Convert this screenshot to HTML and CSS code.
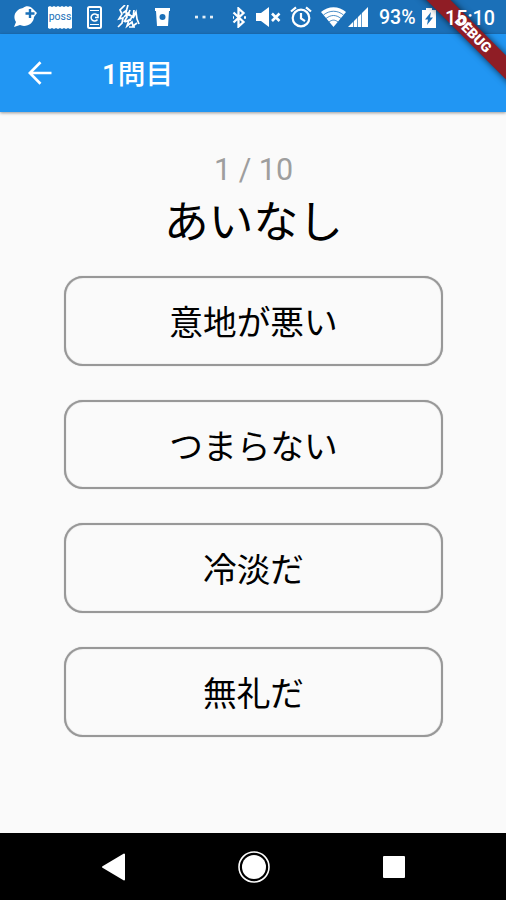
FILE: index.html
```html
<!DOCTYPE html>
<html lang="ja">
<head>
<meta charset="utf-8">
<title>1問目</title>
<link rel="stylesheet" href="styles.css">
</head>
<body>
<div class="screen">
  <div class="status">
    <svg class="bubble" width="24" height="24" viewBox="0 0 24 24"><path fill="#fff" d="M10 3C13 0 18 1 20 4l4 4-3 4c0 5-5 9-10 9-2 0-3-1-4-1l-6 2 2-5C-1 11 3 4 10 3Z"/><path d="M17 4v9M12.500 8.500h9" stroke="#1b70b8" stroke-width="2.4"/></svg>
    <svg class="poss" width="24" height="23" viewBox="0 0 24 23"><path fill="#fff" d="M0 1l2-1 2 1 2-1 2 1 2-1 2 1 2-1 2 1 2-1 2 1 2-1 2 1v21l-2 1-2-1-2 1-2-1-2 1-2-1-2 1-2-1-2 1-2-1-2 1-2-1Z"/><text x="12" y="14" text-anchor="middle">poss</text></svg>
    <svg class="phone" width="15" height="23" viewBox="0 0 15 23"><rect x="1" y="1" width="13" height="21" rx="1.500" fill="none" stroke="#fff" stroke-width="2"/><path d="M3 4.500h9M3 18.500h9" stroke="#fff"/><path d="M10.500 9.500A3.500 3.500 0 1 0 10.500 13.500M11 8v3.500H8" fill="none" stroke="#fff" stroke-width="1.500"/></svg>
    <svg class="figure" width="23" height="24" viewBox="0 0 23 24" fill="none" stroke="#fff" stroke-width="1.700"><path d="M8 0L3 5l2 4-3 5 4-1-1 5-4 4M11 0L9 7l1 5-3 5M7 12l4-4 3 3M13 5l-2 5 4 1-2 5M17 5l-1 8 3-6 1 7 2 5M8 17l4-2-2 6 5-4 1 4 4-3M12 22h6M6 8l4-3"/></svg>
    <svg class="cup" width="15" height="18" viewBox="0 0 15 18"><path fill="#fff" d="M0 0h15v3h-1l-1 15H2L1 3H0Z"/><circle cx="7.500" cy="9" r="3" fill="#1b70b8"/></svg>
    <svg class="dots" width="18" height="4" viewBox="0 0 18 4" fill="#e2edf6"><rect y=".7" width="3" height="2.700"/><rect x="7.500" y=".7" width="3" height="2.700"/><rect x="15" y=".7" width="3" height="2.700"/></svg>
    <svg class="bluetooth" width="14" height="21" viewBox="0 0 14 21"><path d="M1.500 5.500l10 9.500-5 4.500v-18l5 4.500-10 9.500M1 10.500h1M12 10.500h2" fill="none" stroke="#fff" stroke-width="2.300"/></svg>
    <svg class="mute" width="25" height="20" viewBox="0 0 25 20"><path fill="#fff" d="M0 6h5l8-6v20l-8-6H0Z"/><path d="M16 6.500l7.500 7.500M23.500 6.500L16 14" stroke="#fff" stroke-width="2.600"/></svg>
    <svg class="alarm" width="22" height="22" viewBox="0 0 22 22" fill="none" stroke="#fff" stroke-width="2.200"><circle cx="11" cy="12" r="8.300"/><path d="M11 7v5.500l4 2.600M1 5.500L6 1.300M21 5.500L16 1.300"/></svg>
    <svg class="wifi" width="25" height="20" viewBox="0 0 25 20"><path fill="#fff" d="M0 5C7-1.500 18-1.500 25 5L12.500 20Z"/><path d="M2.500 8c6-5 14-5 20 0M5 11.500c5-4 10-4 15 0M8 15c3-2.500 6-2.500 9 0" fill="none" stroke="#1b70b8" stroke-width=".8"/></svg>
    <svg class="signal" width="20" height="20" viewBox="0 0 20 20"><path fill="#fff" d="M0 20L20 0v20Z"/><path d="M5.500 14v6M9.500 10v10M13.500 6v14" stroke="#1b70b8" stroke-width=".7"/></svg>
    <span class="percent">93%</span>
    <svg class="battery" width="14" height="20" viewBox="0 0 14 20"><path fill="#fff" d="M0 2h4V0h6v2h4v18H0Z"/><path fill="#1b70b8" d="M9 4L3 11.500h3L5 17l6-7.500H8Z"/></svg>
    <span class="time">15:10</span>
  </div>
  <header class="appbar">
    <svg class="back" width="24" height="24" viewBox="0 0 24 24"><path d="M23.500 12H2M12.500 1.300L1.800 12l10.700 10.700" fill="none" stroke="#fff" stroke-width="2.700"/></svg>
    <h1>1問目</h1>
  </header>
  <main>
    <p class="progress">1 / 10</p>
    <h2>あいなし</h2>
    <div class="choices">
      <button>意地が悪い</button>
      <button>つまらない</button>
      <button>冷淡だ</button>
      <button>無礼だ</button>
    </div>
  </main>
  <nav>
    <svg width="26" height="28" viewBox="0 0 26 28"><path d="M2 14L23 1.500v25Z" fill="#fff" stroke="#fff" stroke-width="2" stroke-linejoin="round"/></svg>
    <svg width="34" height="34" viewBox="0 0 34 34"><circle cx="17" cy="17" r="15" fill="none" stroke="#fff" stroke-width="1.600"/><circle cx="17" cy="17" r="12" fill="#fff"/></svg>
    <svg width="22" height="22" viewBox="0 0 22 22"><rect width="22" height="22" rx="1" fill="#fff"/></svg>
  </nav>
  <div class="ribbon"><span>DEBUG</span></div>
</div>
</body>
</html>
```
FILE: styles.css
```css
* { box-sizing: border-box; }
body { margin: 0; }
.screen {
  position: relative;
  width: 506px;
  height: 900px;
  overflow: hidden;
  display: flex;
  flex-direction: column;
  background: #fafafa;
  font-family: Roboto, "Noto Sans CJK JP", sans-serif;
}
.status {
  height: 34px;
  flex: none;
  display: flex;
  align-items: center;
  padding-left: 13px;
  background: #1b70b8;
  color: #fff;
  font-size: 19.5px;
  font-weight: 500;
  line-height: 34px;
  white-space: nowrap;
}
.status svg { flex: none; }
.status text { font: 10.5px Roboto, sans-serif; fill: #1b70b8; }
.poss { margin-left: 11px; }
.phone { margin-left: 15px; }
.figure { margin-left: 15px; }
.cup { margin-left: 15px; }
.dots { margin-left: 25px; }
.bluetooth { margin-left: 19px; }
.mute { margin-left: 10px; }
.alarm { margin-left: 9px; }
.wifi { margin-left: 9px; }
.signal { margin-left: 2px; }
.percent { margin-left: 11px; width: 43px; padding-top: 2px; }
.battery { margin-top: 2px; }
.time {
  position: relative;
  z-index: 2;
  margin-left: 9px;
  padding-top: 3px;
  font-size: 19.7px;
}
.appbar {
  height: 78px;
  flex: none;
  display: flex;
  align-items: center;
  padding-left: 28px;
  background: #2196f3;
  box-shadow: 0 1px 3px rgba(0, 0, 0, .4);
}
h1 {
  margin: 0 0 0 50px;
  padding-top: 4px;
  color: #fff;
  font-size: 27.7px;
  font-weight: 500;
  line-height: 40px;
}
main {
  flex: 1;
  display: flex;
  flex-direction: column;
  align-items: center;
  padding: 38px 0 0 1px;
}
.progress {
  margin: 0;
  color: #9e9e9e;
  font-size: 30.5px;
  line-height: 40px;
}
h2 {
  margin: 0;
  padding-top: 3px;
  font-size: 44.7px;
  font-weight: 400;
  line-height: 60px;
  color: #000;
}
.choices {
  display: grid;
  gap: 34px;
  margin-top: 23px;
}
button {
  width: 379px;
  height: 89.7px;
  padding: 0 0 1px;
  border: 2px solid #989898;
  border-radius: 19px;
  box-shadow: 0 0 1px #aaa, inset 0 0 1px #aaa;
  background: #fafafa;
  color: #000;
  font: 400 33.7px Roboto, "Noto Sans CJK JP", sans-serif;
}
nav {
  height: 67px;
  flex: none;
  display: flex;
  align-items: center;
  justify-content: space-between;
  padding: 0 101px 0 101px;
  background: #000;
}
nav svg:nth-child(2) { margin-right: 3px; }
.ribbon {
  position: absolute;
  left: 373px;
  top: 26px;
  width: 200px;
  height: 17px;
  transform: rotate(45deg);
  background: #8f1d25;
  box-shadow: 0 0 7px rgba(0, 0, 0, .7);
  color: #fff;
  text-align: center;
  font-size: 14px;
  font-weight: 900;
  line-height: 17px;
}
```
